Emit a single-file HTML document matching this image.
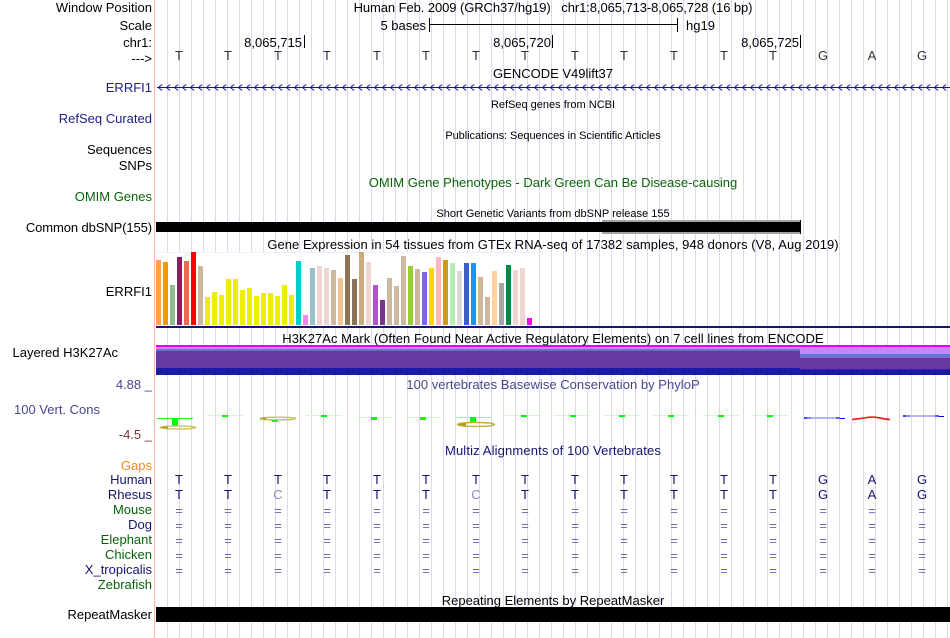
<!DOCTYPE html>
<html><head><meta charset="utf-8"><title>Browser</title>
<style>
html,body{margin:0;padding:0;background:#fff}
#p{position:relative;width:950px;height:638px;overflow:hidden;background:#fff;font:13px/14px "Liberation Sans",sans-serif;color:#000}
svg{position:absolute;left:0;top:0}
.l,.c,.b{position:absolute;white-space:pre}
.l{right:798px;text-align:right}
.c{left:156px;width:794px;text-align:center}
.b{width:20px;text-align:center}
</style></head><body><div id="p">
<svg width="950" height="638" viewBox="0 0 950 638" shape-rendering="crispEdges">
<defs>
<pattern id="gl" x="167" y="0" width="12" height="638" patternUnits="userSpaceOnUse"><rect width="1" height="638" fill="#d9d9f5"/></pattern>
<pattern id="ch" x="157" y="84" width="8" height="7" patternUnits="userSpaceOnUse"><path d="M5 0.5L1.5 3.5L5 6.5" fill="none" stroke="#1a1a80" stroke-width="1" shape-rendering="auto"/></pattern>
</defs>
<rect x="156" y="0" width="794" height="638" fill="url(#gl)"/>
<rect x="154" y="0" width="1" height="638" fill="#ffb4b4"/>

<!-- scale -->
<rect x="429" y="24" width="248" height="1" fill="#000"/>
<rect x="429" y="18" width="1" height="14" fill="#000"/>
<rect x="677" y="18" width="1" height="14" fill="#000"/>
<rect x="304" y="35" width="1" height="13" fill="#000"/>
<rect x="552" y="35" width="1" height="13" fill="#000"/>
<rect x="800" y="35" width="1" height="13" fill="#000"/>

<!-- gene -->
<rect x="157" y="87" width="793" height="1" fill="#1a1a80"/>
<rect x="157" y="84" width="793" height="7" fill="url(#ch)"/>

<!-- dbSNP -->
<rect x="602" y="220" width="199" height="14" fill="#a4a4a4"/>
<rect x="156" y="222" width="645" height="10" fill="#000"/>
<rect x="800" y="220" width="1" height="14" fill="#000"/>

<!-- GTEx -->
<rect x="156" y="252" width="378" height="74" fill="#fff"/>
<rect x="156" y="252" width="378" height="1" fill="#eeeef8"/>
<g>
<rect x="156" y="260" width="5" height="65" fill="#FFA54F"/>
<rect x="163" y="262" width="5" height="63" fill="#EE9A00"/>
<rect x="170" y="285" width="5" height="40" fill="#8FBC8F"/>
<rect x="177" y="257" width="5" height="68" fill="#8B1C62"/>
<rect x="184" y="261" width="5" height="64" fill="#EE6A50"/>
<rect x="191" y="252" width="5" height="73" fill="#FF0000"/>
<rect x="198" y="266" width="5" height="59" fill="#CDB79E"/>
<rect x="205" y="297" width="5" height="28" fill="#EEEE00"/>
<rect x="212" y="292" width="5" height="33" fill="#EEEE00"/>
<rect x="219" y="295" width="5" height="30" fill="#EEEE00"/>
<rect x="226" y="279" width="5" height="46" fill="#EEEE00"/>
<rect x="233" y="279" width="5" height="46" fill="#EEEE00"/>
<rect x="240" y="290" width="5" height="35" fill="#EEEE00"/>
<rect x="247" y="288" width="5" height="37" fill="#EEEE00"/>
<rect x="254" y="296" width="5" height="29" fill="#EEEE00"/>
<rect x="261" y="293" width="5" height="32" fill="#EEEE00"/>
<rect x="268" y="293" width="5" height="32" fill="#EEEE00"/>
<rect x="275" y="296" width="5" height="29" fill="#EEEE00"/>
<rect x="282" y="285" width="5" height="40" fill="#EEEE00"/>
<rect x="289" y="295" width="5" height="30" fill="#EEEE00"/>
<rect x="296" y="261" width="5" height="64" fill="#00CDCD"/>
<rect x="303" y="315" width="5" height="10" fill="#F088F0"/>
<rect x="310" y="268" width="5" height="57" fill="#9AC0CD"/>
<rect x="317" y="266" width="5" height="59" fill="#EED5D2"/>
<rect x="324" y="268" width="5" height="57" fill="#EED5D2"/>
<rect x="331" y="270" width="5" height="55" fill="#CDB79E"/>
<rect x="338" y="278" width="5" height="47" fill="#EEC591"/>
<rect x="345" y="255" width="5" height="70" fill="#8B7355"/>
<rect x="352" y="279" width="5" height="46" fill="#8B7355"/>
<rect x="359" y="252" width="5" height="73" fill="#CDAA7D"/>
<rect x="366" y="262" width="5" height="63" fill="#EED5D2"/>
<rect x="373" y="285" width="5" height="40" fill="#B452CD"/>
<rect x="380" y="300" width="5" height="25" fill="#7A378B"/>
<rect x="387" y="278" width="5" height="47" fill="#CDB79E"/>
<rect x="394" y="286" width="5" height="39" fill="#CDB79E"/>
<rect x="401" y="256" width="5" height="69" fill="#CDB79E"/>
<rect x="408" y="266" width="5" height="59" fill="#9ACD32"/>
<rect x="415" y="269" width="5" height="56" fill="#CDB79E"/>
<rect x="422" y="272" width="5" height="53" fill="#7A67EE"/>
<rect x="429" y="268" width="5" height="57" fill="#FFD700"/>
<rect x="436" y="257" width="5" height="68" fill="#FFB6C1"/>
<rect x="443" y="260" width="5" height="65" fill="#CD9B1D"/>
<rect x="450" y="263" width="5" height="62" fill="#B4EEB4"/>
<rect x="457" y="271" width="5" height="54" fill="#D9D9D9"/>
<rect x="464" y="263" width="5" height="62" fill="#3A5FCD"/>
<rect x="471" y="263" width="5" height="62" fill="#1E90FF"/>
<rect x="478" y="277" width="5" height="48" fill="#CDB79E"/>
<rect x="485" y="297" width="5" height="28" fill="#CDB79E"/>
<rect x="492" y="271" width="5" height="54" fill="#FFD39B"/>
<rect x="499" y="283" width="5" height="42" fill="#A6A6A6"/>
<rect x="506" y="265" width="5" height="60" fill="#008B45"/>
<rect x="513" y="270" width="5" height="55" fill="#EED5D2"/>
<rect x="520" y="268" width="5" height="57" fill="#EED5D2"/>
<rect x="527" y="318" width="5" height="7" fill="#FF00FF"/>
</g>
<rect x="156" y="326" width="794" height="2" fill="#14147c"/>

<!-- H3K27Ac -->
<rect x="156" y="345" width="794" height="2" fill="#e000ff"/>
<rect x="156" y="347" width="644" height="2" fill="#e080ff"/>
<rect x="156" y="349" width="644" height="2" fill="#6a70c8"/>
<rect x="156" y="351" width="644" height="17" fill="#6638a4"/>
<rect x="156" y="368" width="644" height="7" fill="#1a1aa8"/>
<rect x="800" y="347" width="150" height="7" fill="#d080ff"/>
<rect x="800" y="354" width="150" height="4" fill="#6878d0"/>
<rect x="800" y="358" width="150" height="11" fill="#6638a4"/>
<rect x="800" y="369" width="150" height="1" fill="#4a2098"/>
<rect x="800" y="370" width="150" height="5" fill="#1a1aa8"/>

<!-- Conservation -->
<g>
<rect x="157" y="418" width="36" height="1" fill="#20f020"/><rect x="172" y="418" width="6" height="8" fill="#00ff00"/>
<rect x="207" y="415" width="36" height="1" fill="#d2f8d2"/><rect x="222" y="415" width="6" height="2" fill="#00ff00"/>
<rect x="257" y="420" width="36" height="1" fill="#d2f8d2"/><rect x="272" y="420" width="6" height="2" fill="#00ff00"/>
<rect x="306" y="415" width="36" height="1" fill="#d2f8d2"/><rect x="321" y="415" width="6" height="2" fill="#00ff00"/>
<rect x="356" y="417" width="36" height="1" fill="#d2f8d2"/><rect x="371" y="417" width="6" height="3" fill="#00ff00"/>
<rect x="405" y="417" width="36" height="1" fill="#d2f8d2"/><rect x="420" y="417" width="6" height="3" fill="#00ff00"/>
<rect x="455" y="417" width="36" height="1" fill="#a0f0a0"/><rect x="470" y="417" width="6" height="5" fill="#00ff00"/>
<rect x="505" y="415" width="36" height="1" fill="#d2f8d2"/><rect x="521" y="415" width="6" height="2" fill="#00ff00"/>
<rect x="554" y="415" width="36" height="1" fill="#d2f8d2"/><rect x="570" y="415" width="6" height="2" fill="#00ff00"/>
<rect x="604" y="415" width="36" height="1" fill="#d2f8d2"/><rect x="619" y="415" width="6" height="2" fill="#00ff00"/>
<rect x="653" y="415" width="36" height="1" fill="#d2f8d2"/><rect x="668" y="415" width="6" height="2" fill="#00ff00"/>
<rect x="703" y="415" width="36" height="1" fill="#d2f8d2"/><rect x="718" y="415" width="6" height="2" fill="#00ff00"/>
<rect x="752" y="415" width="36" height="1" fill="#d2f8d2"/><rect x="767" y="415" width="6" height="2" fill="#00ff00"/>
<!-- blue -->
<rect x="804" y="417" width="3" height="2" fill="#4848f0"/><rect x="807" y="417" width="4" height="2" fill="#8888f6"/><rect x="811" y="417" width="29" height="2" fill="#b4b4f8"/><rect x="840" y="418" width="5" height="1" fill="#0000e0"/><rect x="836" y="417" width="4" height="2" fill="#6060f0"/>
<rect x="903" y="415" width="3" height="2" fill="#4848f0"/><rect x="906" y="415" width="4" height="2" fill="#8888f6"/><rect x="910" y="415" width="29" height="2" fill="#b4b4f8"/><rect x="939" y="416" width="5" height="1" fill="#0000e0"/><rect x="935" y="415" width="4" height="2" fill="#6060f0"/>
</g>
<g shape-rendering="auto" fill="none">
<ellipse cx="178" cy="427.5" rx="18" ry="1.5" stroke="#c8c060" stroke-width="1.3"/><path d="M159 427.5L168 426.5V428.5Z" fill="#a89c10"/>
<ellipse cx="278" cy="418.5" rx="18" ry="1.3" stroke="#c8c060" stroke-width="1.3"/><path d="M259 418.5L266 417.5V419.5Z" fill="#a89c10"/>
<ellipse cx="476" cy="424.5" rx="18.5" ry="2" stroke="#bdb240" stroke-width="1.4"/><path d="M457 424.5L466 423V426Z" fill="#a89c10"/>
<path d="M852 419.5Q862 418.5 868 417.3Q874 416.6 880 418Q885 419.3 890 419.5" stroke="#f02020" stroke-width="1.7"/>
</g>

<!-- RepeatMasker -->
<rect x="156" y="607" width="794" height="15" fill="#000"/>
</svg>

<div class="l" style="top:1px">Window Position</div>
<div class="l" style="top:19px">Scale</div>
<div class="l" style="top:36px">chr1:</div>
<div class="l" style="top:52px">---&gt;</div>
<div class="l" style="top:81px;color:#20208c">ERRFI1</div>
<div class="l" style="top:112px;color:#20208c">RefSeq Curated</div>
<div class="l" style="top:143px">Sequences</div>
<div class="l" style="top:159px">SNPs</div>
<div class="l" style="top:190px;color:#0a640a">OMIM Genes</div>
<div class="l" style="top:221px;letter-spacing:-.1px">Common dbSNP(155)</div>
<div class="l" style="top:285px">ERRFI1</div>
<div class="l" style="top:346px;right:832px">Layered H3K27Ac</div>
<div class="l" style="top:378px;color:#46468f">4.88 _</div>
<div class="l" style="left:14px;right:auto;top:403px;color:#46468f">100 Vert. Cons</div>
<div class="l" style="top:428px;color:#7d3232">-4.5 _</div>
<div class="l" style="top:459px;color:#f08c14">Gaps</div>
<div class="l" style="top:473px;color:#14146e">Human</div>
<div class="l" style="top:488px;color:#14146e">Rhesus</div>
<div class="l" style="top:503px;color:#0a640a">Mouse</div>
<div class="l" style="top:518px;color:#14146e">Dog</div>
<div class="l" style="top:533px;color:#0a640a">Elephant</div>
<div class="l" style="top:548px;color:#0a640a">Chicken</div>
<div class="l" style="top:563px;color:#14146e">X_tropicalis</div>
<div class="l" style="top:578px;color:#0a640a">Zebrafish</div>
<div class="l" style="top:608px">RepeatMasker</div>

<div class="c" style="top:1px;letter-spacing:-.08px">Human Feb. 2009 (GRCh37/hg19)   chr1:8,065,713-8,065,728 (16 bp)</div>
<div class="l" style="top:19px;right:524px">5 bases</div>
<div class="l" style="top:19px;left:686px;right:auto">hg19</div>
<div class="l" style="top:36px;right:648px">8,065,715</div>
<div class="l" style="top:36px;right:399px">8,065,720</div>
<div class="l" style="top:36px;right:151px">8,065,725</div>
<div class="c" style="top:67px">GENCODE V49lift37</div>
<div class="c" style="top:98px;font-size:11px">RefSeq genes from NCBI</div>
<div class="c" style="top:129px;font-size:11px;letter-spacing:-.05px">Publications: Sequences in Scientific Articles</div>
<div class="c" style="top:176px;color:#0a640a">OMIM Gene Phenotypes - Dark Green Can Be Disease-causing</div>
<div class="c" style="top:207px;font-size:11px">Short Genetic Variants from dbSNP release 155</div>
<div class="c" style="top:238px;letter-spacing:.045px">Gene Expression in 54 tissues from GTEx RNA-seq of 17382 samples, 948 donors (V8, Aug 2019)</div>
<div class="c" style="top:332px;letter-spacing:.045px">H3K27Ac Mark (Often Found Near Active Regulatory Elements) on 7 cell lines from ENCODE</div>
<div class="c" style="top:378px;color:#46468f;letter-spacing:.03px">100 vertebrates Basewise Conservation by PhyloP</div>
<div class="c" style="top:444px;color:#14146e;letter-spacing:.14px">Multiz Alignments of 100 Vertebrates</div>
<div class="c" style="top:594px">Repeating Elements by RepeatMasker</div>

<!-- Base row -->
<div class="b" style="left:169px;top:49px;color:#333">T</div><div class="b" style="left:218px;top:49px;color:#333">T</div><div class="b" style="left:268px;top:49px;color:#333">T</div><div class="b" style="left:317px;top:49px;color:#333">T</div><div class="b" style="left:367px;top:49px;color:#333">T</div><div class="b" style="left:416px;top:49px;color:#333">T</div><div class="b" style="left:466px;top:49px;color:#333">T</div><div class="b" style="left:515px;top:49px;color:#333">T</div><div class="b" style="left:565px;top:49px;color:#333">T</div><div class="b" style="left:614px;top:49px;color:#333">T</div><div class="b" style="left:664px;top:49px;color:#333">T</div><div class="b" style="left:714px;top:49px;color:#333">T</div><div class="b" style="left:763px;top:49px;color:#333">T</div><div class="b" style="left:813px;top:49px;color:#333">G</div><div class="b" style="left:862px;top:49px;color:#333">A</div><div class="b" style="left:912px;top:49px;color:#333">G</div>

<!-- Human -->
<div class="b" style="left:169px;top:473px;color:#14146e">T</div><div class="b" style="left:218px;top:473px;color:#14146e">T</div><div class="b" style="left:268px;top:473px;color:#14146e">T</div><div class="b" style="left:317px;top:473px;color:#14146e">T</div><div class="b" style="left:367px;top:473px;color:#14146e">T</div><div class="b" style="left:416px;top:473px;color:#14146e">T</div><div class="b" style="left:466px;top:473px;color:#14146e">T</div><div class="b" style="left:515px;top:473px;color:#14146e">T</div><div class="b" style="left:565px;top:473px;color:#14146e">T</div><div class="b" style="left:614px;top:473px;color:#14146e">T</div><div class="b" style="left:664px;top:473px;color:#14146e">T</div><div class="b" style="left:714px;top:473px;color:#14146e">T</div><div class="b" style="left:763px;top:473px;color:#14146e">T</div><div class="b" style="left:813px;top:473px;color:#14146e">G</div><div class="b" style="left:862px;top:473px;color:#14146e">A</div><div class="b" style="left:912px;top:473px;color:#14146e">G</div>

<!-- Rhesus -->
<div class="b" style="left:169px;top:488px;color:#14146e">T</div><div class="b" style="left:218px;top:488px;color:#14146e">T</div><div class="b" style="left:268px;top:488px;color:#8a8abc">C</div><div class="b" style="left:317px;top:488px;color:#14146e">T</div><div class="b" style="left:367px;top:488px;color:#14146e">T</div><div class="b" style="left:416px;top:488px;color:#14146e">T</div><div class="b" style="left:466px;top:488px;color:#8a8abc">C</div><div class="b" style="left:515px;top:488px;color:#14146e">T</div><div class="b" style="left:565px;top:488px;color:#14146e">T</div><div class="b" style="left:614px;top:488px;color:#14146e">T</div><div class="b" style="left:664px;top:488px;color:#14146e">T</div><div class="b" style="left:714px;top:488px;color:#14146e">T</div><div class="b" style="left:763px;top:488px;color:#14146e">T</div><div class="b" style="left:813px;top:488px;color:#14146e">G</div><div class="b" style="left:862px;top:488px;color:#14146e">A</div><div class="b" style="left:912px;top:488px;color:#14146e">G</div>

<!-- = rows -->
<div class="b" style="left:169px;top:503px;color:#6a6aa8;line-height:15px">=<br>=<br>=<br>=<br>=</div><div class="b" style="left:218px;top:503px;color:#6a6aa8;line-height:15px">=<br>=<br>=<br>=<br>=</div><div class="b" style="left:268px;top:503px;color:#6a6aa8;line-height:15px">=<br>=<br>=<br>=<br>=</div><div class="b" style="left:317px;top:503px;color:#6a6aa8;line-height:15px">=<br>=<br>=<br>=<br>=</div><div class="b" style="left:367px;top:503px;color:#6a6aa8;line-height:15px">=<br>=<br>=<br>=<br>=</div><div class="b" style="left:416px;top:503px;color:#6a6aa8;line-height:15px">=<br>=<br>=<br>=<br>=</div><div class="b" style="left:466px;top:503px;color:#6a6aa8;line-height:15px">=<br>=<br>=<br>=<br>=</div><div class="b" style="left:515px;top:503px;color:#6a6aa8;line-height:15px">=<br>=<br>=<br>=<br>=</div><div class="b" style="left:565px;top:503px;color:#6a6aa8;line-height:15px">=<br>=<br>=<br>=<br>=</div><div class="b" style="left:614px;top:503px;color:#6a6aa8;line-height:15px">=<br>=<br>=<br>=<br>=</div><div class="b" style="left:664px;top:503px;color:#6a6aa8;line-height:15px">=<br>=<br>=<br>=<br>=</div><div class="b" style="left:714px;top:503px;color:#6a6aa8;line-height:15px">=<br>=<br>=<br>=<br>=</div><div class="b" style="left:763px;top:503px;color:#6a6aa8;line-height:15px">=<br>=<br>=<br>=<br>=</div><div class="b" style="left:813px;top:503px;color:#6a6aa8;line-height:15px">=<br>=<br>=<br>=<br>=</div><div class="b" style="left:862px;top:503px;color:#6a6aa8;line-height:15px">=<br>=<br>=<br>=<br>=</div><div class="b" style="left:912px;top:503px;color:#6a6aa8;line-height:15px">=<br>=<br>=<br>=<br>=</div>
</div></body></html>
